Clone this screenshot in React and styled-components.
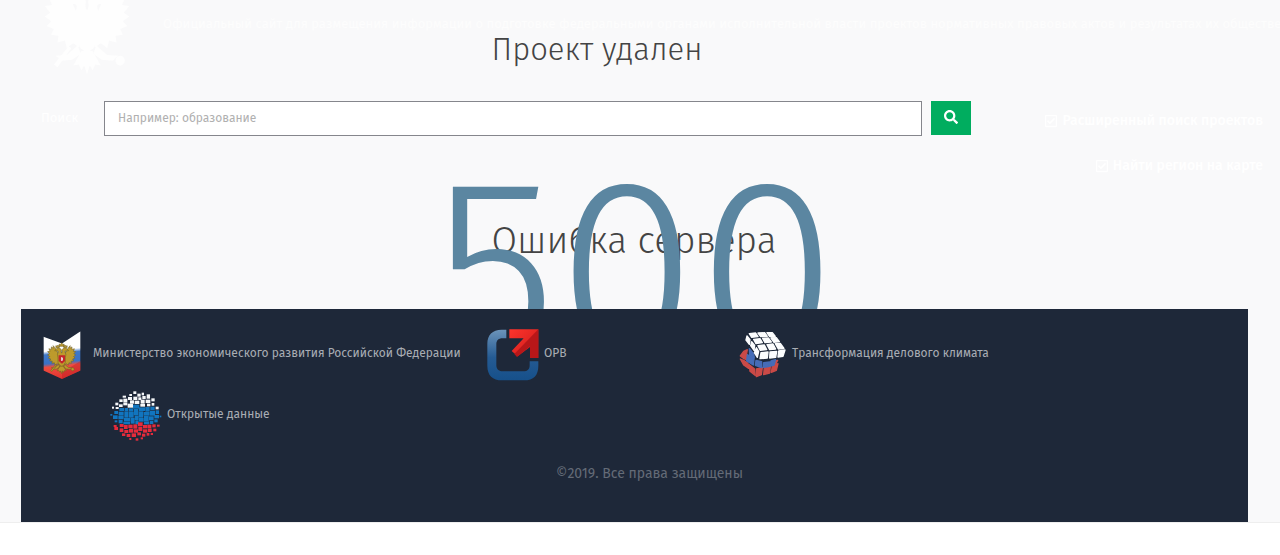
import React from "react";
import styled, { createGlobalStyle } from "styled-components";
import { FaSearch, FaRegCheckSquare } from "react-icons/fa";

const GlobalStyle = createGlobalStyle`
    * {
        box-sizing: border-box;
    }
    body {
        margin: 0;
        background-color: #ffffff;
        font-family: "Fira Sans", "Open Sans", "Noto Sans", sans-serif;
        overflow-x: hidden;
    }
`;

// [x, y, width, height]
const whiteTiles = [
    [69, 1, 9, 8], [57, 9, 8, 6], [81, 8, 10, 9], [94, 5, 7, 8], [37, 14, 10, 6],
    [69, 17, 12, 10], [53, 18, 12, 9], [84, 19, 9, 8], [96, 15, 10, 9], [109, 10, 10, 13],
    [27, 25, 10, 8], [39, 23, 12, 10], [59, 28, 12, 10], [73, 29, 14, 10], [91, 26, 12, 12],
    [106, 26, 14, 10], [123, 22, 10, 9], [15, 35, 9, 8], [26, 40, 11, 8], [39, 34, 12, 9],
    [52, 38, 16, 12], [90, 39, 14, 8], [110, 38, 10, 8], [124, 36, 8, 8], [136, 47, 9, 8],
    [5, 47, 6, 6], [16, 48, 9, 6],
];
const blueTiles = [
    [27, 51, 14, 9], [43, 51, 10, 9], [68, 41, 19, 12], [70, 54, 14, 19], [86, 49, 18, 11],
    [105, 48, 13, 14], [120, 47, 13, 10], [55, 52, 13, 10], [12, 60, 11, 9], [25, 62, 15, 12],
    [42, 61, 12, 19], [55, 63, 15, 17], [85, 61, 14, 19], [100, 63, 18, 11], [119, 59, 15, 15],
    [136, 58, 10, 11], [0, 69, 6, 5], [8, 73, 14, 11], [24, 75, 16, 10], [41, 81, 19, 10],
    [61, 81, 12, 17], [73, 74, 12, 13], [86, 81, 14, 11], [101, 75, 14, 15], [116, 76, 14, 12],
    [132, 72, 14, 10], [148, 74, 5, 5], [25, 87, 12, 10], [39, 92, 20, 8], [75, 88, 10, 12],
    [101, 91, 16, 9], [119, 90, 10, 9], [132, 85, 10, 9], [13, 88, 8, 6],
];
const redTiles = [
    [28, 99, 12, 9], [10, 102, 9, 6], [41, 102, 11, 12], [54, 101, 13, 10], [69, 100, 12, 13],
    [83, 94, 14, 11], [98, 102, 12, 10], [111, 101, 12, 11], [126, 100, 10, 9], [140, 101, 8, 6],
    [12, 108, 11, 9], [28, 112, 11, 11], [42, 117, 12, 9], [56, 113, 12, 12], [70, 115, 13, 10],
    [84, 107, 12, 13], [98, 115, 13, 10], [113, 113, 11, 10], [129, 113, 9, 8], [35, 127, 10, 8],
    [49, 129, 11, 9], [64, 127, 13, 11], [81, 124, 11, 9], [95, 128, 10, 9], [109, 126, 8, 8],
    [121, 126, 7, 6], [57, 141, 6, 6], [76, 142, 8, 7], [91, 139, 7, 6],
];

const drawTiles = (tiles, fill) =>
    tiles.map(([x, y, w, h]) => (
        <rect key={`${x}-${y}`} x={x} y={y} width={w} height={h} fill={fill} />
    ));

const EagleShape = () => (
    <>
        <path d="M41 40C36 26 29 14 22 8l1 8-7-4 1 8-9-2 4 8-8 1 6 7-6 4 7 5-5 5 8 3-3 6 8 1-1 7 8-2 2 8 7-5 6 4 5-8z" />
        <path d="M59 40C64 26 71 14 78 8l-1 8 7-4-1 8 9-2-4 8 8 1-6 7 6 4-7 5 5 5-8 3 3 6-8 1 1 7-8-2-2 8-7-5-6 4-5-8z" />
        <path d="M50 32c-2-4-2-6-1-9-2-9-14-11-17-3l-5 4 8 1c5-1 5 4 1 10l2 12v15l5 9 7 5 7-5 5-9V47l2-12c-4-6-4-11 1-10l8-1-5-4c-3-8-15-6-17 3 1 3 1 5-1 9z" />
        <path d="M40 68 28 78l-12 1 6 5 12-1 9-6zM60 68l12 10 12 1-6 5-12-1-9-6zM44 74l-9 15 6-1 3 6 3-5 3 9 3-9 3 5 3-6 6 1-9-15z" />
        <path d="M42 10V3l4 2 4-6 4 6 4-2v7zM31 14V8l4 2 3-4 2 4 3-1-1 5zM57 14l-1-5 3 1 2-4 3 4 4-2v6z" />
        <path d="M14 88 30 69l3 2-15 20zM86 79a5 5 0 1 0 .1 0z" />
    </>
);

const MinistryIcon = () => (
    <svg width="38" height="48" viewBox="0 0 112 142" aria-hidden="true">
        <defs>
            <clipPath id="shield">
                <path d="M1 17 56 37 111 1v116l-55 25-55-25z" />
            </clipPath>
            <linearGradient id="flag" x1="0" y1="0" x2="0" y2="1">
                <stop offset="0.36" stopColor="#ffffff" />
                <stop offset="0.42" stopColor="#3f78c8" />
                <stop offset="0.58" stopColor="#3b72c4" />
                <stop offset="0.64" stopColor="#ef4d40" />
                <stop offset="1" stopColor="#d92324" />
            </linearGradient>
        </defs>
        <g clipPath="url(#shield)">
            <g transform="translate(0 10) skewY(-6)">
                <rect y="-10" width="112" height="170" fill="url(#flag)" />
            </g>
            <path d="M56 122 112 88v29l-56 25z" fill="#b81c24" opacity="0.4" />
        </g>
        <g transform="translate(10 36) scale(.9 .92)" fill="#bd9a2c" stroke="#776526" strokeWidth="2">
            <EagleShape />
        </g>
        <path d="M46 72h19v17l-9 8-10-8z" fill="#c5252a" />
        <path d="M53 77l6 2v8l-6 2z" fill="#e5cfcb" />
    </svg>
);

const OrvIcon = () => (
    <svg width="52" height="52" viewBox="0 0 156 156" aria-hidden="true">
        <defs>
            <linearGradient id="orvBlue" x1="0" y1="0" x2="0" y2="1">
                <stop offset="0" stopColor="#6c94ba" />
                <stop offset="0.55" stopColor="#255b93" />
                <stop offset="1" stopColor="#16508a" />
            </linearGradient>
            <linearGradient id="orvRed" x1="0" y1="0" x2="1" y2="1">
                <stop offset="0" stopColor="#ff342c" />
                <stop offset="1" stopColor="#c91a1a" />
            </linearGradient>
        </defs>
        <path
            d="M58 2H44C16 2 1 18 1 44v66c0 29 16 44 44 44h66c29 0 43-15 43-44V97h-26v12c0 12-7 18-18 18H46c-11 0-18-7-18-18V46c0-12 7-18 18-18h12z"
            fill="url(#orvBlue)"
        />
        <path d="M67 1h87v86h-25V54L92 82 74 66l36-38H67z" fill="url(#orvRed)" />
        <path d="M154 1v86h-25V52L90 84l-8-9z" fill="#b81719" />
    </svg>
);

const CubeIcon = () => (
    <svg width="48" height="46" viewBox="0 0 144 138" aria-hidden="true">
        <g fill="#ca4a47" stroke="#ca4a47" strokeWidth="4" strokeLinejoin="round">
            <path d="M4 72 14 58l11-5-3 17 2 14-11-5zM4 81l11 5 12 8 2 15-15-10zM31 98l15 12 2 20-15-12zM52 111l18-4-3 21-15 6zM76 107l18-4-2 20-18 5zM100 102l17-7-5 20-15 6zM98 90l18-5-5 9-15 5z" />
        </g>
        <g fill="#466cb7" stroke="#466cb7" strokeWidth="4" strokeLinejoin="round">
            <path d="M31 50 44 66l2 12-14-8zM25 68l20 14-2 17-20-12zM51 85l17 4v18l-19-7zM74 92l18-2-3 14-16 2zM96 87l14-4-5 16-14 4z" />
        </g>
        <g fill="#fcfdfe" stroke="#fcfdfe" strokeWidth="4" strokeLinejoin="round">
            <path d="M31 5 50 3l7 11-19 2zM57 3l20-1 8 11-20 1zM84 2h16l9 11-17 1zM44 22l19-2 7 12-19 3zM71 19l17-1 9 12-19 2zM96 18l16-1 9 12-16 2zM57 41l19-2 7 14-19 2zM84 38l18-2 8 15-18 2zM109 35l15-1 11 15-17 2zM24 12l9 11-2 14-10-13zM38 29l9 11-2 15-10-14zM52 47l7 12-4 17-9-14zM66 62l21-2-2 18-22 2zM93 60l20-2-3 18-18 2zM119 57l19-3-6 19-15 2z" />
        </g>
    </svg>
);

const OpenDataIcon = () => (
    <svg width="52" height="50" viewBox="0 0 154 150" aria-hidden="true">
        {drawTiles(whiteTiles, "#f5f7f9")}
        {drawTiles(blueTiles, "#1175bf")}
        {drawTiles(redTiles, "#e52b3c")}
    </svg>
);

const App = () => {
    return (
        <>
            <GlobalStyle />
            <Page>
                <Header>
                    <Emblem viewBox="0 0 100 100" preserveAspectRatio="none" aria-hidden="true">
                        <EagleShape />
                    </Emblem>
                    <HeaderText>
                        <Tagline>
                            Официальный сайт для размещения информации о подготовке федеральными
                            органами исполнительной власти проектов нормативных правовых актов и
                            результатах их общественного обсуждения
                        </Tagline>
                    </HeaderText>
                </Header>
                <Title>Проект удален</Title>

                <SearchRow>
                    <SearchForm onSubmit={e => e.preventDefault()}>
                        <SearchLabel htmlFor="search">Поиск</SearchLabel>
                        <SearchInput id="search" type="text" placeholder="Например: образование" />
                        <SearchButton type="submit" aria-label="Поиск">
                            <FaSearch />
                        </SearchButton>
                    </SearchForm>
                    <SearchLinks>
                        <SearchLink href="#search">
                            <FaRegCheckSquare /> Расширенный поиск проектов
                        </SearchLink>
                        <SearchLink href="#map">
                            <FaRegCheckSquare /> Найти регион на карте
                        </SearchLink>
                    </SearchLinks>
                </SearchRow>

                <ErrorBlock>
                    <ErrorText>Ошибка сервера</ErrorText>
                    <ErrorCode>500</ErrorCode>
                </ErrorBlock>

                <Footer>
                    <Partners>
                        <Partner href="#ministry" gap="12px">
                            <MinistryIcon />
                            <PartnerName>
                                Министерство экономического развития Российской Федерации
                            </PartnerName>
                        </Partner>
                        <Partner href="#orv">
                            <OrvIcon />
                            <PartnerName>ОРВ</PartnerName>
                        </Partner>
                        <Partner href="#climate">
                            <CubeIcon />
                            <PartnerName>Трансформация делового климата</PartnerName>
                        </Partner>
                        <Partner href="#data" indent="67px">
                            <OpenDataIcon />
                            <PartnerName>Открытые данные</PartnerName>
                        </Partner>
                    </Partners>
                    <Copyright>©2019. Все права защищены</Copyright>
                </Footer>
            </Page>
        </>
    );
};

// 스타일 컴포넌트
const Page = styled.div`
    background-color: #f9f9fa;
    border-bottom: 1px solid #eeeeee;
`;

const Header = styled.header`
    display: flex;
    height: 32px;
    padding-left: 41px;
`;

const Emblem = styled.svg`
    flex: none;
    width: 92px;
    height: 96px;
    margin-top: -20px;
    fill: #fefefe;
`;

const HeaderText = styled.div`
    flex: 1;
    min-width: 0;
    padding: 15px 0 0 30px;
    overflow: hidden;
`;

const Tagline = styled.p`
    margin: 0;
    color: #fdfdfd;
    font-size: 13px;
    line-height: 17px;
    white-space: nowrap;
`;

const Title = styled.h1`
    margin: 0 0 0 38.4%;
    color: #444444;
    font-size: 31px;
    font-weight: 300;
    line-height: 36px;
`;

const SearchRow = styled.section`
    display: flex;
    padding: 33px 17px 0 41px;
`;

const SearchForm = styled.form`
    display: flex;
    flex: 1;
    align-items: flex-start;
`;

const SearchLabel = styled.label`
    width: 63px;
    color: #ffffff;
    font-size: 13px;
    line-height: 34px;
`;

const SearchInput = styled.input`
    flex: 1;
    min-width: 0;
    height: 35px;
    padding: 0 13px 2px;
    border: 1px solid #85868c;
    border-radius: 0;
    background-color: #ffffff;
    color: #444444;
    font-family: inherit;
    font-size: 12px;
    &::placeholder {
        color: #b0b0b0;
    }
`;

const SearchButton = styled.button`
    display: flex;
    align-items: center;
    justify-content: center;
    width: 40px;
    height: 34px;
    margin-left: 9px;
    padding: 0 0 3px;
    border: 0;
    background-color: #00ad5f;
    color: #ffffff;
    font-size: 14px;
`;

const SearchLinks = styled.nav`
    display: flex;
    flex-direction: column;
    align-items: flex-end;
    gap: 25px;
    width: 292px;
    padding-top: 10px;
`;

const SearchLink = styled.a`
    display: flex;
    align-items: center;
    gap: 4px;
    color: #ffffff;
    font-size: 14px;
    font-weight: 500;
    line-height: 20px;
    text-decoration: none;
`;

const ErrorBlock = styled.main`
    position: relative;
    padding: 40px 0 43px;
`;

const ErrorText = styled.h2`
    margin: 0 0 0 38.4%;
    color: #444444;
    font-size: 37px;
    font-weight: 300;
    line-height: 50px;
`;

// 오류 코드는 제목 위에 겹쳐진다
const ErrorCode = styled.div`
    position: absolute;
    top: -73px;
    left: 0;
    width: 100%;
    padding-right: 10px;
    color: #5b86a1;
    font-size: 255px;
    font-weight: 300;
    line-height: 336px;
    text-align: center;
    pointer-events: none;
`;

const Footer = styled.footer`
    position: relative;
    margin: 0 32px 0 21px;
    padding: 20px 22px 38px;
    background-color: #1e2839;
`;

const Partners = styled.div`
    display: grid;
    grid-template-columns: 444fr 252fr 487fr;
    grid-auto-rows: 52px;
    row-gap: 9px;
`;

const Partner = styled.a`
    display: flex;
    align-items: center;
    gap: ${props => props.gap || "5px"};
    margin-left: ${props => props.indent || "0"};
    color: #a9adb4;
    font-size: 12px;
    line-height: 16px;
    text-decoration: none;
    white-space: nowrap;
    svg {
        flex: none;
    }
`;

const PartnerName = styled.span`
    padding-bottom: 4px;
`;

const Copyright = styled.p`
    margin: 22px 0 0;
    padding-left: 30px;
    color: #646b77;
    font-size: 14px;
    line-height: 20px;
    text-align: center;
`;

export default App;
